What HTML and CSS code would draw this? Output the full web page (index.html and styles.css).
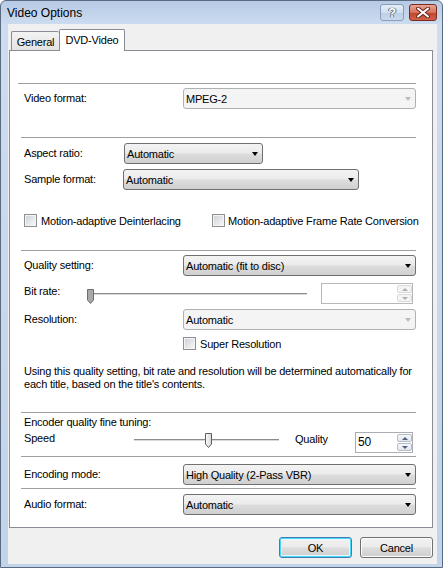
FILE: index.html
```html
<!DOCTYPE html>
<html>
<head>
<meta charset="utf-8">
<link rel="stylesheet" href="styles.css">
</head>
<body>
<div class="window">
  <div class="titlebar">
    <span class="title">Video Options</span>
    <div class="caption-btns">
      <div class="cbtn help">?</div>
      <div class="cbtn close">
        <svg width="14" height="11" viewBox="0 0 14 11"><path d="M2 1.5 L12 9.5 M12 1.5 L2 9.5" stroke="#6a2a20" stroke-width="4" stroke-linecap="round"/><path d="M2 1.5 L12 9.5 M12 1.5 L2 9.5" stroke="#ffffff" stroke-width="2" stroke-linecap="round"/></svg>
      </div>
    </div>
  </div>
  <div class="client">
    <div class="tabs">
      <div class="tab">General</div>
      <div class="tab active">DVD-Video</div>
    </div>
    <div class="panel">
      <div class="sep sep-first"></div>
      <div class="row row-video">
        <span class="lbl lbl-wide">Video format:</span>
        <div class="combo disabled grow"><span>MPEG-2</span><i class="arrow"></i></div>
      </div>
      <div class="sep sep-2"></div>
      <div class="row row-aspect">
        <span class="lbl lbl-narrow">Aspect ratio:</span>
        <div class="combo combo-aspect"><span>Automatic</span><i class="arrow"></i></div>
      </div>
      <div class="row row-sample">
        <span class="lbl lbl-narrow">Sample format:</span>
        <div class="combo combo-sample"><span>Automatic</span><i class="arrow"></i></div>
      </div>
      <div class="row row-checks">
        <label class="check check-1"><i class="box"></i><span>Motion-adaptive Deinterlacing</span></label>
        <label class="check check-2"><i class="box"></i><span>Motion-adaptive Frame Rate Conversion</span></label>
      </div>
      <div class="sep sep-3"></div>
      <div class="row row-quality">
        <span class="lbl lbl-wide">Quality setting:</span>
        <div class="combo grow"><span>Automatic (fit to disc)</span><i class="arrow"></i></div>
      </div>
      <div class="row row-bitrate">
        <span class="lbl lbl-top lbl-bitrate">Bit rate:</span>
        <div class="slider slider-bitrate">
          <div class="track"></div>
          <svg class="thumb thumb-bitrate" width="7" height="15" viewBox="0 0 7 15"><path d="M0.5 0.5 H6.5 V11 L3.5 14.5 L0.5 11 Z" fill="#a9a9a9" stroke="#6e6e6e"/></svg>
        </div>
        <div class="spin spin-bitrate disabled">
          <div class="spin-val"></div>
          <div class="spin-btns"><div class="sb"><i class="up"></i></div><div class="sb"><i class="down"></i></div></div>
        </div>
      </div>
      <div class="row row-resolution">
        <span class="lbl lbl-wide">Resolution:</span>
        <div class="combo disabled grow"><span>Automatic</span><i class="arrow"></i></div>
      </div>
      <div class="row row-super">
        <label class="check"><i class="box"></i><span>Super Resolution</span></label>
      </div>
      <p class="note">Using this quality setting, bit rate and resolution will be determined automatically for<br>each title, based on the title's contents.</p>
      <div class="sep sep-4"></div>
      <div class="lbl encoder">Encoder quality fine tuning:</div>
      <div class="row row-speed">
        <span class="lbl lbl-top lbl-speed">Speed</span>
        <div class="slider slider-speed">
          <div class="track"></div>
          <svg class="thumb thumb-speed" width="7" height="15" viewBox="0 0 7 15"><defs><linearGradient id="tg" x1="0" y1="0" x2="1" y2="0"><stop offset="0" stop-color="#fdfdfd"/><stop offset="1" stop-color="#d6d6d6"/></linearGradient></defs><path d="M0.5 0.5 H6.5 V11 L3.5 14.5 L0.5 11 Z" fill="url(#tg)" stroke="#5e5e5e"/></svg>
        </div>
        <span class="quality-lbl">Quality</span>
        <div class="spin spin-speed">
          <div class="spin-val">50</div>
          <div class="spin-btns"><div class="sb"><i class="up"></i></div><div class="sb"><i class="down"></i></div></div>
        </div>
      </div>
      <div class="sep sep-5"></div>
      <div class="row row-encoding">
        <span class="lbl lbl-wide">Encoding mode:</span>
        <div class="combo grow"><span>High Quality (2-Pass VBR)</span><i class="arrow"></i></div>
      </div>
      <div class="sep sep-6"></div>
      <div class="row row-audio">
        <span class="lbl lbl-wide">Audio format:</span>
        <div class="combo grow"><span>Automatic</span><i class="arrow"></i></div>
      </div>
    </div>
    <div class="buttons">
      <div class="btn default">OK</div>
      <div class="btn">Cancel</div>
    </div>
  </div>
</div>
</body>
</html>
```

FILE: styles.css
```css
html, body {
  margin: 0;
  padding: 0;
  background: #ffffff;
}
body {
  font-family: "Liberation Sans", Arial, sans-serif;
  font-size: 11px;
  letter-spacing: -0.2px;
  color: #000;
}
.window {
  width: 443px;
  height: 568px;
  box-sizing: border-box;
  border: 1px solid #5a6a80;
  border-radius: 6px 6px 0 0;
  background: linear-gradient(#b7cbe5 0px, #cddcef 24px, #c2d4ea 100%);
  display: flex;
  flex-direction: column;
  padding: 0 5px 3px 7px;
  overflow: hidden;
}
.titlebar {
  height: 23px;
  display: flex;
  align-items: flex-start;
  margin-left: -1px;
}
.title {
  font-size: 12px;
  letter-spacing: 0;
  margin-top: 5px;
  color: #000;
}
.caption-btns {
  margin-left: auto;
  margin-top: 3px;
  display: flex;
  gap: 5px;
}
.cbtn {
  height: 17px;
  box-sizing: border-box;
  border-radius: 3px;
  display: flex;
  align-items: center;
  justify-content: center;
}
.help {
  width: 24px;
  border: 1px solid #8b9db6;
  background: linear-gradient(#e4edf7 0%, #d2dfee 50%, #bccfe6 51%, #c9daee 100%);
  color: #fff;
  font-weight: bold;
  font-size: 13px;
  text-shadow: 0 0 1px #4a5a70, 0 0 1px #4a5a70, 1px 0 0 #6a7a90, -1px 0 0 #6a7a90;
}
.close {
  width: 28px;
  border: 1px solid #7a2c20;
  background: linear-gradient(#e8a494 0%, #d7715c 50%, #c1432b 51%, #d0634a 100%);
}
.client {
  flex: 1;
  background: #f0f0f0;
  display: flex;
  flex-direction: column;
}
.tabs {
  margin-top: 5px;
  margin-left: 3px;
  height: 21px;
  display: flex;
  align-items: flex-end;
  position: relative;
  z-index: 1;
}
.tab {
  box-sizing: border-box;
  border: 1px solid #898c95;
  border-bottom: none;
  border-radius: 2px 2px 0 0;
  display: flex;
  align-items: center;
  justify-content: center;
}
.tab:first-child {
  width: 48px;
  height: 19px;
  background: linear-gradient(#f3f3f3, #e3e3e3);
  padding-top: 2px;
  border-right: none;
}
.tab.active {
  width: 66px;
  height: 22px;
  margin-bottom: -1px;
  background: #fff;
  padding-bottom: 1px;
}
.panel {
  margin-left: 1px;
  margin-right: 4px;
  height: 478px;
  box-sizing: border-box;
  border: 1px solid #898c95;
  background: #fff;
  padding: 0 16px 0 11px;
  display: flex;
  flex-direction: column;
}
.sep {
  height: 1px;
  background: #a0a0a0;
  flex: none;
}
.sep-first { margin-top: 32px; margin-left: -3px; }
.sep-2 { margin-top: 28px; }
.sep-3 { margin-top: 23px; }
.sep-4 { margin-top: 21px; }
.sep-5 { margin-top: 3px; }
.sep-6 { margin-top: 3px; }
.row {
  display: flex;
  align-items: center;
  flex: none;
  white-space: nowrap;
}
.row-video { margin-top: 4px; }
.row-aspect { margin-top: 5px; }
.row-sample { margin-top: 5px; }
.row-checks { margin-top: 24px; height: 13px; }
.row-quality { margin-top: 4px; }
.row-bitrate { margin-top: 7px; align-items: flex-start; }
.row-resolution { margin-top: 5px; }
.row-super { margin-top: 7px; height: 13px; padding-left: 162px; }
.row-speed { margin-top: 3px; align-items: flex-start; }
.row-encoding { margin-top: 7px; }
.row-audio { margin-top: 5px; }
.lbl {
  padding-left: 3px;
  box-sizing: border-box;
  flex: none;
  line-height: 14px;
  padding-bottom: 1px;
}
.lbl-wide { width: 162px; }
.lbl-narrow { width: 102px; }
.lbl-bitrate { width: 66px; margin-top: 1px; }
.lbl-speed { width: 110px; margin-top: -1px; }
.encoder {
  margin-top: 2px;
  padding-bottom: 0;
}
.combo {
  height: 21px;
  box-sizing: border-box;
  border: 1px solid #707070;
  border-radius: 3px;
  background: linear-gradient(#f3f3f3 0%, #ebebeb 48%, #dddddd 52%, #d0d0d0 100%);
  display: flex;
  align-items: center;
  padding-left: 2px;
  flex: none;
}
.combo.grow { flex: 1; }
.combo.disabled {
  border-color: #adb2b5;
  background: #f4f4f4;
}
.combo-aspect { width: 139px; margin-left: 1px; }
.combo-sample { width: 236px; }
.arrow {
  margin-left: auto;
  margin-right: 4px;
  width: 0;
  height: 0;
  border-left: 3.5px solid transparent;
  border-right: 3.5px solid transparent;
  border-top: 4px solid #000;
}
.combo.disabled .arrow { border-top-color: #bcbcbc; }
.check {
  display: flex;
  align-items: center;
  gap: 4px;
  flex: none;
  white-space: nowrap;
}
.check-1 { margin-left: 3px; width: 188px; }
.check-2 { gap: 3px; }
.box {
  width: 13px;
  height: 13px;
  box-sizing: border-box;
  border: 1px solid #8e8f8f;
  background: linear-gradient(135deg, #cbcfd5 0%, #eceef0 70%, #f7f7f7 100%);
  box-shadow: inset 0 0 0 1px #f4f4f4;
  flex: none;
}
.slider {
  position: relative;
  height: 20px;
  flex: none;
}
.slider-bitrate { width: 221px; }
.slider-speed { width: 151px; }
.track {
  position: absolute;
  top: 10px;
  height: 2px;
  background: linear-gradient(#8c8c8c 50%, #d9d9d9 50%);
}
.slider-bitrate .track { left: 1px; right: 1px; }
.slider-speed .track { left: 3px; right: 3px; top: 7px; }
.thumb {
  position: absolute;
}
.thumb-bitrate { left: 0; top: 6px; }
.thumb-speed { left: 74px; top: 1px; }
.quality-lbl {
  margin-left: 13px;
  line-height: 14px;
}
.spin {
  height: 21px;
  box-sizing: border-box;
  border: 1px solid #abadb3;
  background: #fff;
  margin-left: auto;
  margin-right: 3px;
  display: flex;
  flex: none;
}
.spin.disabled { border-color: #b8b8b8; }
.spin-bitrate { width: 92px; }
.spin-speed { width: 58px; }
.spin-val {
  flex: 1;
  padding-left: 2px;
  line-height: 19px;
  font-size: 12px;
}
.spin-btns {
  width: 15px;
  display: flex;
  flex-direction: column;
  gap: 1px;
  padding: 1px 0;
}
.sb {
  flex: 1;
  box-sizing: border-box;
  border: 1px solid #b5bdc8;
  border-radius: 2px;
  background: linear-gradient(#f6f7f9, #e2e6ec);
  display: flex;
  align-items: center;
  justify-content: center;
}
.spin.disabled .sb {
  border-color: #dadada;
  background: #f4f4f4;
}
.sb i {
  width: 0;
  height: 0;
  border-left: 3px solid transparent;
  border-right: 3px solid transparent;
}
.sb .up { border-bottom: 3px solid #4d6185; }
.sb .down { border-top: 3px solid #4d6185; }
.spin.disabled .sb .up { border-bottom-color: #b0b0b0; }
.spin.disabled .sb .down { border-top-color: #b0b0b0; }
.note {
  margin: 15px 0 0 0;
  padding-left: 3px;
  line-height: 13px;
}
.buttons {
  margin-top: 9px;
  padding-right: 4px;
  display: flex;
  justify-content: flex-end;
  gap: 8px;
}
.btn {
  width: 73px;
  height: 21px;
  box-sizing: border-box;
  border: 1px solid #707070;
  border-radius: 3px;
  background: linear-gradient(#f2f2f2 0%, #ebebeb 48%, #dddddd 52%, #cfcfcf 100%);
  display: flex;
  align-items: center;
  justify-content: center;
  box-shadow: inset 0 0 0 1px #fcfcfc;
}
.btn.default {
  border-color: #3c7fb1;
  box-shadow: inset 0 0 0 1px #48d8fb, inset 0 0 0 2px #e8f6fd;
}
```
